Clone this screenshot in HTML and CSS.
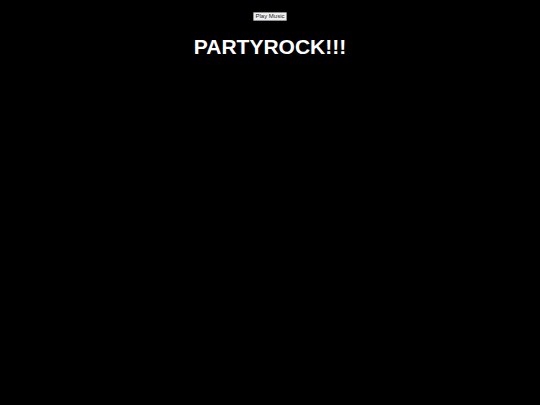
FILE: index.html
```html
<!DOCTYPE html>
<html>
<head>
<meta charset="utf-8">
<link rel="stylesheet" href="styles.css">
</head>
<body>
<div class="page">
  <button class="play">Play Music</button>
  <h1 class="title">PARTYROCK!!!</h1>
</div>
</body>
</html>
```
FILE: styles.css
```css
html, body {
  margin: 0;
  padding: 0;
  background: #000;
  height: 100%;
}
.page {
  display: flex;
  flex-direction: column;
  align-items: center;
  padding-top: 12px;
  font-family: "Liberation Sans", Arial, sans-serif;
}
.play {
  font-family: "Liberation Sans", Arial, sans-serif;
  font-size: 6px;
  line-height: 7px;
  height: 9px;
  width: 34px;
  padding: 0;
  margin: 0;
  background: #efefef;
  color: #222;
  border: 1px solid #8f8f8f;
  border-radius: 1px;
  display: flex;
  align-items: center;
  justify-content: center;
  white-space: nowrap;
}
.title {
  margin: 14px 0 0 0;
  color: #fff;
  font-size: 21px;
  line-height: 24px;
  font-weight: bold;
}
```
